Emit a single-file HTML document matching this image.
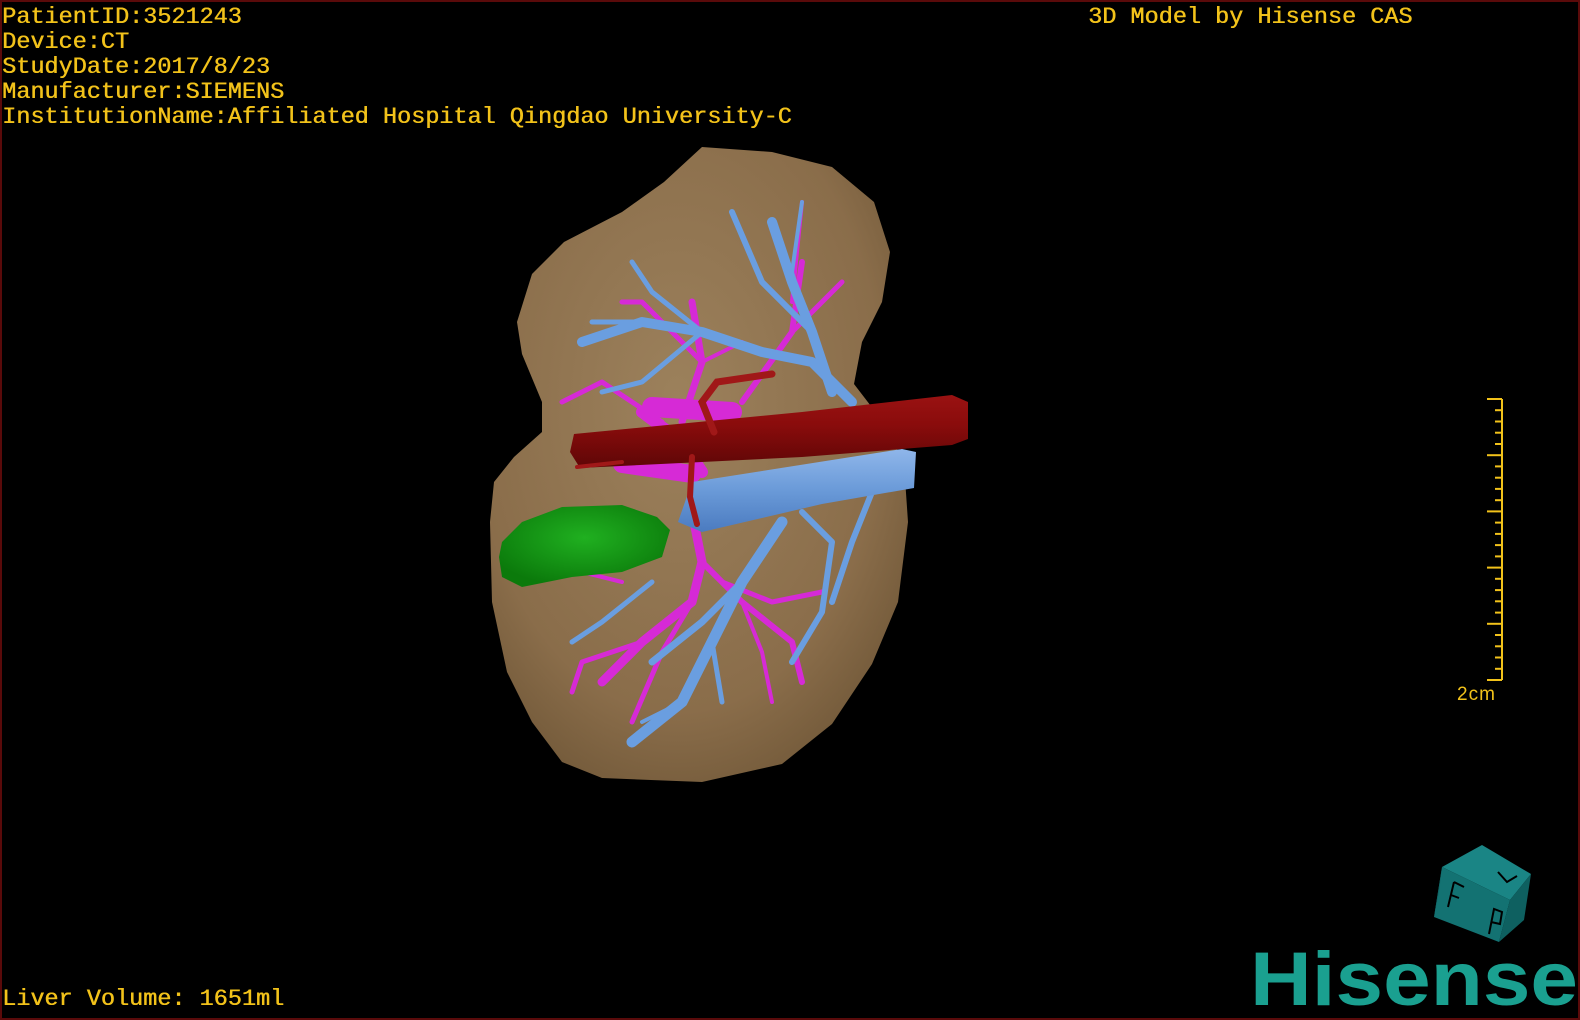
<!DOCTYPE html>
<html><head><meta charset="utf-8"><style>
html,body{margin:0;padding:0;background:#000;}
#w{position:relative;width:1580px;height:1020px;background:#000;overflow:hidden;box-sizing:border-box;border:2px solid #5a0a0a;}
.t{position:absolute;font-family:"Liberation Mono",monospace;font-size:23.5px;color:#f2c21a;line-height:25px;white-space:pre;text-shadow:0.5px 0 0 #f2c21a;}
svg{position:absolute;left:0;top:0;}
</style></head><body><div id="w">
<svg width="1580" height="1020" viewBox="0 0 1580 1020">
<defs>
<radialGradient id="lv" cx="0.45" cy="0.4" r="0.7"><stop offset="0" stop-color="#9c815c"/><stop offset="0.7" stop-color="#8a6d4a"/><stop offset="1" stop-color="#6c5435"/></radialGradient>
<linearGradient id="rd" x1="0" y1="0" x2="0" y2="1"><stop offset="0" stop-color="#9a1212"/><stop offset="0.4" stop-color="#8a0c0c"/><stop offset="1" stop-color="#5e0606"/></linearGradient>
<linearGradient id="bl" x1="0" y1="0" x2="0" y2="1"><stop offset="0" stop-color="#8fb6ea"/><stop offset="0.5" stop-color="#6a9ad8"/><stop offset="1" stop-color="#4b7bc0"/></linearGradient>
<radialGradient id="gr" cx="0.5" cy="0.4" r="0.6"><stop offset="0" stop-color="#20b020"/><stop offset="1" stop-color="#0b7a0b"/></radialGradient>
</defs>
<path fill="url(#lv)" d="M700,145 L770,150 L830,165 L872,200 L888,250 L880,300 L860,340 L852,382 L885,425 L902,462 L906,520 L896,600 L870,662 L830,722 L780,762 L700,780 L600,776 L560,760 L530,720 L505,670 L490,600 L488,520 L492,480 L512,455 L540,430 L540,400 L520,352 L515,320 L530,272 L562,240 L620,210 L662,180 Z"/>
<g fill="none" stroke="#d62ad6" stroke-linecap="round" stroke-linejoin="round">
<path stroke-width="9" d="M690,510 L700,560 L690,600 L640,640 L600,680"/>
<path stroke-width="6" d="M700,560 L740,600 L790,640 L800,680"/>
<path stroke-width="5" d="M690,600 L660,650 L630,720"/>
<path stroke-width="5" d="M720,580 L770,600 L820,590"/>
<path stroke-width="5" d="M640,640 L580,660 L570,690"/>
<path stroke-width="4" d="M740,600 L760,650 L770,700"/>
<path stroke-width="4" d="M620,580 L580,570"/>
<path stroke-width="12" d="M640,410 L680,440 L700,470"/>
<path stroke-width="7" d="M680,420 L700,360 L690,300"/>
<path stroke-width="6" d="M740,400 L790,330 L800,260"/>
<path stroke-width="5" d="M790,330 L840,280"/>
<path stroke-width="5" d="M700,360 L640,300 L620,300"/>
<path stroke-width="5" d="M660,420 L600,380 L560,400"/>
<path stroke-width="4" d="M790,300 L800,200"/>
<path stroke-width="4" d="M700,360 L740,340"/>
<path stroke-width="20" d="M650,405 L730,410"/>
<path stroke-width="18" d="M620,462 L690,472"/>
</g>
<g fill="none" stroke="#6a9ee0" stroke-linecap="round" stroke-linejoin="round">
<path stroke-width="10" d="M850,400 L810,360 L760,350 L700,330 L640,320 L580,340"/>
<path stroke-width="10" d="M830,390 L810,330 L790,280 L770,220"/>
<path stroke-width="6" d="M810,330 L760,280 L730,210"/>
<path stroke-width="5" d="M700,330 L650,290 L630,260"/>
<path stroke-width="5" d="M640,320 L590,320"/>
<path stroke-width="5" d="M700,330 L640,380 L600,390"/>
<path stroke-width="4" d="M790,270 L800,200"/>
<path stroke-width="11" d="M780,520 L740,580 L710,640 L680,700 L630,740"/>
<path stroke-width="7" d="M740,580 L700,620 L650,660"/>
<path stroke-width="6" d="M800,510 L830,540 L820,610 L790,660"/>
<path stroke-width="6" d="M870,490 L850,540 L830,600"/>
<path stroke-width="5" d="M710,640 L720,700"/>
<path stroke-width="5" d="M650,580 L600,620 L570,640"/>
<path stroke-width="4" d="M680,700 L640,720"/>
</g>
<path fill="url(#bl)" d="M690,480 L900,447 L914,450 L912,486 L820,502 L700,530 L676,520 Z"/>
<path fill="url(#rd)" d="M572,432 L800,410 L950,393 L966,400 L966,437 L950,443 L800,455 L700,460 L578,466 L568,450 Z"/>
<g fill="none" stroke="#a01818" stroke-linecap="round">
<path stroke-width="7" d="M712,430 L700,400 L715,380 L770,372"/>
<path stroke-width="6" d="M690,455 L688,495 L695,522"/>
<path stroke-width="4" d="M575,465 L620,460"/>
</g>
<path fill="url(#gr)" d="M500,540 L520,520 L560,505 L620,503 L655,515 L668,528 L660,555 L620,570 L570,575 L520,585 L500,575 L497,555 Z"/>
<g stroke="#f2c21a" stroke-width="2" fill="none">
<path d="M1500,397 L1500,678 M1485,397 L1500,397"/>
</g>
<g stroke="#f2c21a" stroke-width="2">
<line x1="1493" y1="408.2" x2="1500" y2="408.2"/><line x1="1493" y1="419.5" x2="1500" y2="419.5"/><line x1="1493" y1="430.7" x2="1500" y2="430.7"/><line x1="1493" y1="442" x2="1500" y2="442"/><line x1="1485" y1="453.2" x2="1500" y2="453.2"/>
<line x1="1493" y1="464.4" x2="1500" y2="464.4"/><line x1="1493" y1="475.7" x2="1500" y2="475.7"/><line x1="1493" y1="486.9" x2="1500" y2="486.9"/><line x1="1493" y1="498.2" x2="1500" y2="498.2"/><line x1="1485" y1="509.4" x2="1500" y2="509.4"/>
<line x1="1493" y1="520.6" x2="1500" y2="520.6"/><line x1="1493" y1="531.9" x2="1500" y2="531.9"/><line x1="1493" y1="543.1" x2="1500" y2="543.1"/><line x1="1493" y1="554.4" x2="1500" y2="554.4"/><line x1="1485" y1="565.6" x2="1500" y2="565.6"/>
<line x1="1493" y1="576.8" x2="1500" y2="576.8"/><line x1="1493" y1="588.1" x2="1500" y2="588.1"/><line x1="1493" y1="599.3" x2="1500" y2="599.3"/><line x1="1493" y1="610.6" x2="1500" y2="610.6"/><line x1="1485" y1="621.8" x2="1500" y2="621.8"/>
<line x1="1493" y1="633" x2="1500" y2="633"/><line x1="1493" y1="644.3" x2="1500" y2="644.3"/><line x1="1493" y1="655.5" x2="1500" y2="655.5"/><line x1="1493" y1="666.8" x2="1500" y2="666.8"/><line x1="1485" y1="678" x2="1500" y2="678"/>
</g>
<text x="1455" y="698" font-family="Liberation Sans, sans-serif" font-size="19" fill="#f2c21a" letter-spacing="1">2cm</text>
<polygon points="1440,865 1480,843 1529,872 1508,898" fill="#1a8585"/>
<polygon points="1440,865 1508,898 1497,940 1432,915" fill="#137272"/>
<polygon points="1432,915 1440,865 1437,890" fill="#0f6464"/>
<polygon points="1508,898 1529,872 1522,918 1497,940" fill="#0e6060"/>
<path d="M1452,880 L1446,905 M1452,880 L1462,885 M1449,893 L1457,896" stroke="#000" stroke-width="2" fill="none"/>
<path d="M1496,870 L1505,880 L1515,874" stroke="#000" stroke-width="2" fill="none"/>
<path d="M1487,932 L1492,907 L1500,910 L1498,922 L1489,920" stroke="#000" stroke-width="2" fill="none"/>
<text x="1248" y="1003" font-family="Liberation Sans, sans-serif" font-weight="bold" font-size="76" fill="#1aa090" textLength="328" lengthAdjust="spacingAndGlyphs">Hisense</text>
</svg>
<div class="t" style="left:0;top:3px;">PatientID:3521243
Device:CT
StudyDate:2017/8/23
Manufacturer:SIEMENS
InstitutionName:Affiliated Hospital Qingdao University-C</div>
<div class="t" style="left:1086px;top:3px;">3D Model by Hisense CAS</div>
<div class="t" style="left:0;top:985px;">Liver Volume: 1651ml</div>
</div></body></html>
